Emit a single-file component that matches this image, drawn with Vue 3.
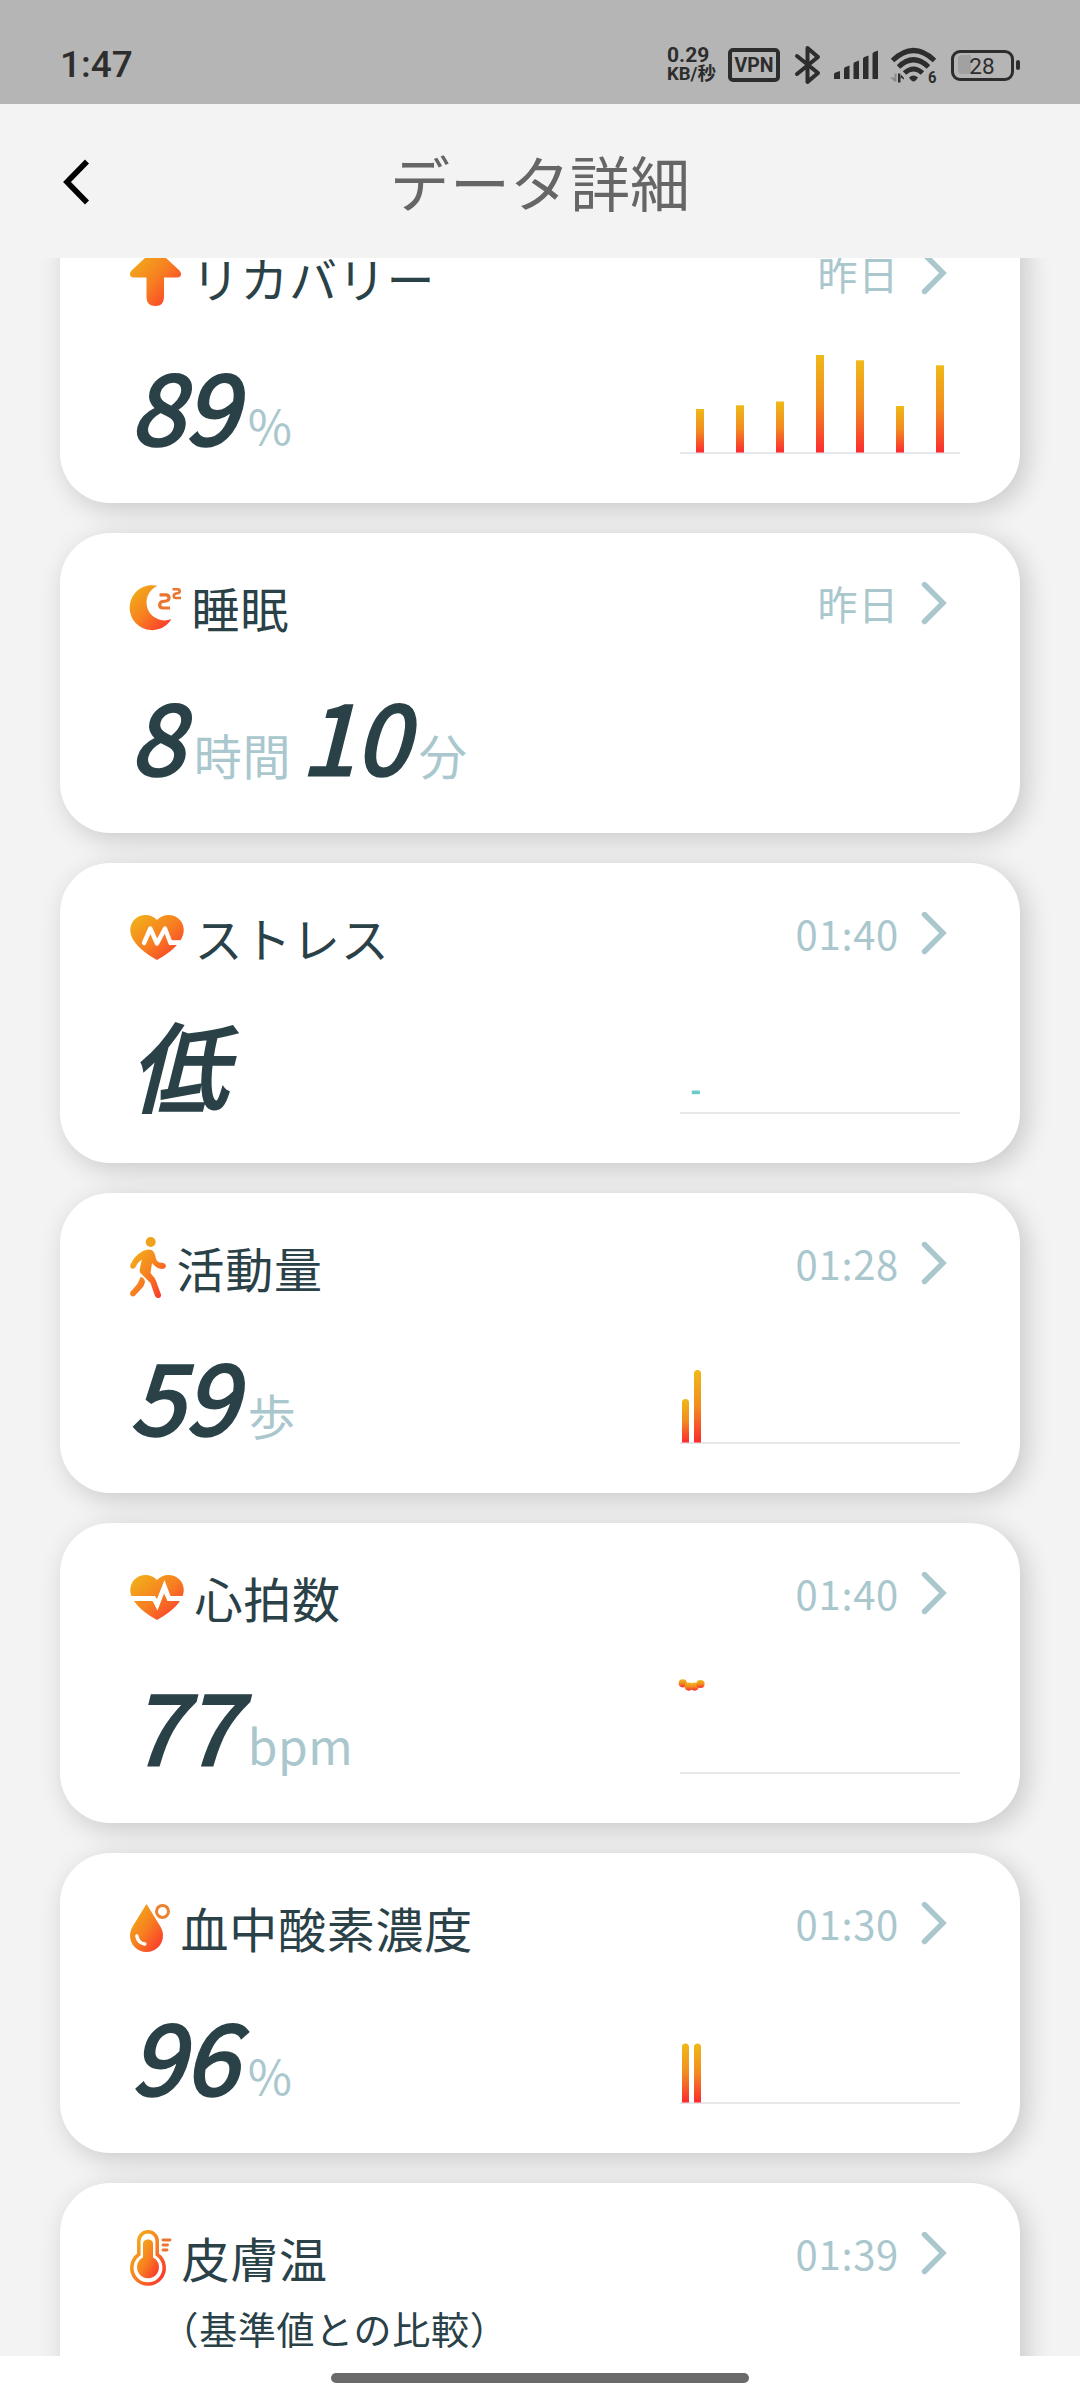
<script setup>
const BASE = 100.5

const bars = (list, width, rounded) =>
  list.map(([x, top]) => ({ x, top, width, h: BASE - top, rounded }))

const cards = [
  {
    id: 'recovery', title: 'リカバリー', time: '昨日', icon: [51, 56],
    parts: [['89', '%']],
    bars: bars([[16, 57], [56, 53.3], [96, 49.5], [136, 3], [176, 8.3], [216, 54], [256, 13.3]], 8, false),
  },
  { id: 'sleep', title: '睡眠', time: '昨日', icon: [51, 45], parts: [['8', '時間'], ['10', '分']], noChart: true },
  { id: 'stress', title: 'ストレス', time: '01:40', icon: [54, 45], parts: [['低', '']], dash: true },
  {
    id: 'activity', title: '活動量', time: '01:28', icon: [36, 61], parts: [['59', '歩']],
    bars: bars([[2, 57], [14, 28]], 7, true),
  },
  {
    id: 'heart', title: '心拍数', time: '01:40', icon: [54, 45], parts: [['77', 'bpm']],
    dots: [[2.8, 11.3], [8.8, 14.6], [14.6, 14.6], [20.5, 12]],
  },
  {
    id: 'oxygen', title: '血中酸素濃度', time: '01:30', icon: [40, 48], parts: [['96', '%']],
    bars: bars([[2, 41.5], [14, 41.5]], 7, true),
  },
  { id: 'skin', title: '皮膚温', time: '01:39', icon: [41, 55], note: '（基準値との比較）', parts: [], noChart: true },
]
</script>

<template>
  <div class="screen">
    <svg class="defs" width="0" height="0">
      <defs>
        <linearGradient id="warm" x1="0" y1="0" x2="1" y2="1">
          <stop offset="0" stop-color="#f0b619" />
          <stop offset="0.5" stop-color="#f78020" />
          <stop offset="1" stop-color="#fb2d30" />
        </linearGradient>
        <linearGradient id="bar" x1="0" y1="0" x2="0" y2="1">
          <stop offset="0" stop-color="#efb918" />
          <stop offset="0.5" stop-color="#f28c20" />
          <stop offset="1" stop-color="#fb2a30" />
        </linearGradient>
      </defs>
    </svg>

    <header class="status">
      <span class="clock">1:47</span>
      <div class="tray">
        <div class="speed"><span>0.29</span><span class="unit-line">KB/秒</span></div>
        <span class="vpn">VPN</span>
        <svg class="bt" width="26" height="40" viewBox="0 0 26 40">
          <path d="M2 11 L23 28 L12.5 37 V3 L23 12 L2 29" />
        </svg>
        <svg class="signal" width="45" height="30" viewBox="0 0 45 30">
          <path d="M0 29V24.5Q0 23 1.5 22.5L6 21V29Z M10 29V19Q10 17.5 11.5 17L15.500 15.500V29Z M19.500 29V14Q19.500 12.500 21 12L25 10.500V29Z M29 29V9Q29 7.500 30.500 7L34.500 5.500V29Z M38.500 29V4Q38.500 2.500 40 2L44 .5V29Z" />
        </svg>
        <svg class="wifi" width="48" height="36" viewBox="0 0 48 36">
          <path class="arc" d="M2.500 13.500 Q23.500 -6.500 44.500 13.500" />
          <path class="arc" d="M8.500 20 Q23.500 5.500 38.500 20" />
          <path class="arc" d="M14.500 26 Q23.500 18 32.500 26" />
          <path d="M19 30.500 Q23.500 26.500 28 30.500 Q25.500 34.500 23.500 34.500 Q21.500 34.500 19 30.500Z" />
          <path class="down" d="M4.500 26.500V34.500H6.500V26.500Z M0 30 L5 35 V31Z" />
          <path d="M8 26.500V35.500H10.500V26.500Z M10 26.500 L14 31 V32.500 L10 30Z" />
          <text x="38" y="35.500" textLength="8.500" lengthAdjust="spacingAndGlyphs">6</text>
        </svg>
        <div class="battery"><span class="charge"></span><span class="level">28</span></div>
        <span class="nub"></span>
      </div>
    </header>

    <nav class="bar">
      <svg class="back" width="30" height="46" viewBox="0 0 30 46"><path d="M26 2.500 L6 23 L26 43.500" /></svg>
      <h1>データ詳細</h1>
    </nav>

    <main class="viewport">
      <div class="list">
        <section v-for="card in cards" :key="card.id" class="card">
          <div class="head">
            <svg class="icon" :width="card.icon[0]" :height="card.icon[1]" :viewBox="`0 0 ${card.icon[0]} ${card.icon[1]}`">
              <path
                v-if="card.id === 'recovery'" fill="url(#warm)"
                d="M22 1.500 Q25.500 -1 29 1.500 L49.500 20.500 Q52 24 50.500 26 Q49.500 27.500 47 27.500 H34 V47 Q34 56 25.500 56 Q16.500 56 16.500 47 V27.500 H4 Q1.500 27.500 .5 26 Q-1 24 1.500 20.500Z"
              />
              <template v-else-if="card.id === 'sleep'">
                <path fill="url(#warm)" d="M27.500 .8 A22.500 22.500 0 1 0 41.500 34 A18 18 0 0 1 27.500 .8Z" />
                <path class="zz" stroke-width="3.200" d="M29.500 9.800 H36 Q39 9.800 39 13 Q39 15.500 36 16 L32.500 16.500 Q29.700 17 29.700 20 Q29.700 23 33 23 H40" />
                <path class="zz" stroke-width="2.600" d="M42.500 4.200 H47.500 Q49.700 4.200 49.700 6.200 Q49.700 8 47.500 8.300 L46 8.600 Q43.800 9 43.800 11 Q43.800 13 46 13 H51" />
              </template>
              <template v-else-if="card.id === 'stress'">
                <path fill="url(#warm)" d="M27 5 C34 -2.500 45 -.5 50 5 C55 11 55 19 50 26 C45 33.500 36 40 27 45 C18 40 9 33.500 4 26 C-1 19 -1 11 4 5 C9 -.5 20 -2.500 27 5Z" />
                <path class="cut" stroke-width="4.400" stroke-linejoin="round" stroke-linecap="round" d="M14 28 L20.300 13.500 L27 28.500 L35 13.500 L40.500 28" />
                <path class="cut" stroke-width="4.800" d="M39 27.600 H54" />
              </template>
              <template v-else-if="card.id === 'activity'">
                <circle cx="20.700" cy="5" r="5" fill="#efa31d" />
                <path
                  fill="url(#warm)"
                  d="M13 14 Q18 11.500 21.500 13 Q24.500 14.500 25.500 20 Q26.500 24.500 29.500 25.500 L33.500 26 Q36 27 36 29 Q35.500 32 32 32 Q26 31.500 22 26 L20.500 36 L24.500 41 Q26.500 44 27.500 48 L31 57.500 Q31.200 61 28.500 61 Q26 61.500 25 59 L20.500 46 L11.500 37 Q9 35 9.800 32 L11.800 22.500 Q8 25 5.500 30 Q4 32.500 1.500 31.500 Q-.5 30.500 .5 27.500 Q4 19 13 14Z M10.500 40 Q14.500 40.500 15 45 Q14 49 12 51 L5 58.500 Q3 60.500 .8 58.500 Q-.8 56.500 .8 54.500 L7 47.500 Q9 44.500 10.500 40Z"
                />
              </template>
              <template v-else-if="card.id === 'heart'">
                <path fill="url(#warm)" d="M27 5 C34 -2.500 45 -.5 50 5 C55 11 55 19 50 26 C45 33.500 36 40 27 45 C18 40 9 33.500 4 26 C-1 19 -1 11 4 5 C9 -.5 20 -2.500 27 5Z" />
                <path fill="#fff" d="M0 21 H25 L27 24 L34.500 5 L40.500 21 H54 V26 H37.500 L34 18.500 L27.500 35.500 L22.500 26 H0Z" />
              </template>
              <template v-else-if="card.id === 'oxygen'">
                <path fill="url(#warm)" d="M16.500 0 Q19 4 27 17 C31 23 33 27 33 31.500 C33 41 25.500 48 16.500 48 C7.500 48 0 41 0 31.500 C0 27 2 23 6 17 Q14 4 16.500 0Z" />
                <circle cx="32.500" cy="7.400" r="6" fill="none" stroke="#ea8230" stroke-width="3" />
                <path class="cut" stroke-width="3.400" stroke-linecap="round" d="M6.800 32 Q8 39 14.800 40" />
              </template>
              <template v-else>
                <path fill="none" stroke="url(#warm)" stroke-width="3.500" d="M8.800 24.500 V11 A9.200 9.200 0 0 1 27.200 11 V24.500 A16.200 16.200 0 1 1 8.800 24.500Z" />
                <path fill="url(#warm)" d="M13 14 Q13 9.500 18 9.500 Q23 9.500 23 14 V27.500 A11 11 0 1 1 13 27.500Z" />
                <path class="zz" stroke-width="2.900" stroke-linecap="round" d="M33 10 H40 M33 15 H37.500 M33 20 H37" />
              </template>
            </svg>
            <div class="name">{{ card.title }}</div>
            <div class="when">
              <span>{{ card.time }}</span>
              <svg width="26" height="44" viewBox="0 0 26 44"><path d="M3.500 3.500 L22 22 L3.500 40.500" /></svg>
            </div>
          </div>
          <p v-if="card.note" class="note">{{ card.note }}</p>
          <div v-else class="body">
            <div class="values">
              <template v-for="part in card.parts" :key="part[0]">
                <span class="num">{{ part[0] }}</span>
                <span v-if="part[1]" class="unit">{{ part[1] }}</span>
              </template>
            </div>
            <svg v-if="!card.noChart" class="chart" width="284" height="103" viewBox="-2 0 284 103">
              <rect x="0" y="100" width="280" height="2" fill="#e6e7e8" />
              <template v-if="card.bars">
                <path
                  v-for="b in card.bars" :key="b.x" fill="url(#bar)"
                  :d="b.rounded
                    ? `M${b.x} ${BASE}V${b.top + 3.5}a3.5 3.5 0 0 1 ${b.width} 0V${BASE}Z`
                    : `M${b.x} ${BASE}V${b.top}h${b.width}V${BASE}Z`"
                />
              </template>
              <template v-if="card.dots">
                <circle v-for="d in card.dots" :key="d[0]" :cx="d[0]" :cy="d[1]" r="4.100" fill="url(#bar)" />
              </template>
              <rect v-if="card.dash" x="11.700" y="78.500" width="8.300" height="3.800" rx="1" fill="#6dcccb" />
            </svg>
          </div>
        </section>
      </div>
    </main>

    <footer class="gesture"><span></span></footer>
  </div>
</template>

<style>
html,
body {
  margin: 0;
  background: #f3f3f3;
}
</style>

<style scoped>
.screen {
  width: 1080px;
  height: 2400px;
  display: flex;
  flex-direction: column;
  overflow: hidden;
  background: #f3f3f3;
  font-family: "Noto Sans CJK JP", sans-serif;
}
.defs {
  position: absolute;
}
.status {
  flex: none;
  height: 104px;
  box-sizing: border-box;
  padding: 26px 60px 0 60px;
  display: flex;
  justify-content: space-between;
  align-items: center;
  background: #b5b5b5;
  color: #2d2d2d;
  font-family: Roboto, "Noto Sans CJK JP", sans-serif;
}
.clock {
  font-size: 37px;
  font-weight: 500;
  line-height: 40px;
}
.tray {
  display: flex;
  align-items: center;
}
.tray svg {
  fill: #2d2d2d;
  overflow: visible;
}
.speed {
  width: 61px;
  display: flex;
  flex-direction: column;
  font-size: 21px;
  font-weight: 700;
  line-height: 19px;
  white-space: nowrap;
}
.unit-line {
  font-size: 18.5px;
}
.vpn {
  width: 52px;
  height: 34px;
  box-sizing: border-box;
  border: 4px solid #2d2d2d;
  border-radius: 5px;
  text-align: center;
  font-size: 19.5px;
  font-weight: 700;
  line-height: 27px;
}
.bt {
  margin-left: 15px;
}
.tray .bt path {
  fill: none;
  stroke: #2d2d2d;
  stroke-width: 4;
  stroke-linejoin: round;
  stroke-linecap: round;
}
.signal {
  margin-left: 13px;
}
.wifi {
  margin-left: 11px;
}
.wifi .arc {
  fill: none;
  stroke: #2d2d2d;
  stroke-width: 5;
}
.tray .wifi .down {
  fill: #8a8a8a;
}
.wifi text {
  font-size: 16px;
  font-weight: 700;
}
.battery {
  position: relative;
  width: 63px;
  height: 31px;
  box-sizing: border-box;
  margin-left: 13px;
  border: 3.5px solid #2d2d2d;
  border-radius: 9px;
  display: flex;
  align-items: center;
  justify-content: center;
}
.charge {
  position: absolute;
  left: 4px;
  top: 2.5px;
  width: 13px;
  height: 19px;
  border-radius: 4px 0 0 4px;
  background: #a1a1a1;
}
.level {
  position: relative;
  font-size: 22.5px;
  line-height: 26px;
  padding: 1px 1px 0 0;
}
.nub {
  width: 4px;
  height: 10px;
  margin-left: 2px;
  border-radius: 2px;
  background: #2d2d2d;
}
.bar {
  flex: none;
  height: 154px;
  display: grid;
  grid-template-columns: 120px 1fr 120px;
  align-items: center;
}
.back {
  justify-self: start;
  margin-left: 61px;
  margin-top: 2px;
}
.back path {
  fill: none;
  stroke: #000;
  stroke-width: 5.6;
}
h1 {
  margin: 0;
  text-align: center;
  font-size: 60px;
  font-weight: 400;
  line-height: 80px;
  color: #666;
}
.viewport {
  flex: none;
  height: 2098px;
  overflow: hidden;
}
.list {
  margin-top: -55px;
  padding: 0 60px;
  display: flex;
  flex-direction: column;
  gap: 30px;
}
.card {
  height: 300px;
  box-sizing: border-box;
  padding: 0 73px 0 70px;
  border-radius: 50px;
  background: #fff;
  box-shadow: 6px 6px 27px rgba(0, 0, 0, 0.18);
}
.head {
  height: 149px;
  display: flex;
  align-items: center;
}
.icon {
  flex: none;
  overflow: visible;
}
.zz {
  fill: none;
  stroke: #ea7430;
}
.cut {
  fill: none;
  stroke: #fff;
}
.name {
  flex: 1;
  margin: 0 0 2px 10.5px;
  font-size: 48px;
  line-height: 70px;
  letter-spacing: 0.75px;
  color: #294147;
}
.when {
  display: flex;
  align-items: center;
  gap: 22px;
  margin-bottom: 9px;
  font-size: 40px;
  line-height: 58px;
  letter-spacing: 0.7px;
  color: #a9c7cd;
}
.when path {
  fill: none;
  stroke: #a9c7cd;
  stroke-width: 5.4;
  stroke-linecap: round;
  stroke-linejoin: miter;
}
.body {
  display: flex;
  justify-content: space-between;
  margin-right: -15px;
}
.values {
  display: flex;
  align-items: baseline;
  gap: 10px;
  line-height: 102px;
  white-space: nowrap;
}
.num {
  font-size: 97px;
  font-weight: 400;
  font-style: italic;
  color: #294147;
  -webkit-text-stroke: 3px #294147;
}
.unit {
  font-size: 48px;
  letter-spacing: 0.6px;
  color: #a9c7cd;
}
.chart {
  overflow: visible;
}
.note {
  margin: -32px 0 0 30.5px;
  font-size: 38px;
  line-height: 56px;
  letter-spacing: 0.7px;
  color: #294147;
}
.gesture {
  flex: none;
  height: 44px;
  display: flex;
  align-items: center;
  justify-content: center;
  background: #fff;
}
.gesture span {
  width: 418px;
  height: 10px;
  border-radius: 5px;
  background: #6a6a6a;
}
</style>
